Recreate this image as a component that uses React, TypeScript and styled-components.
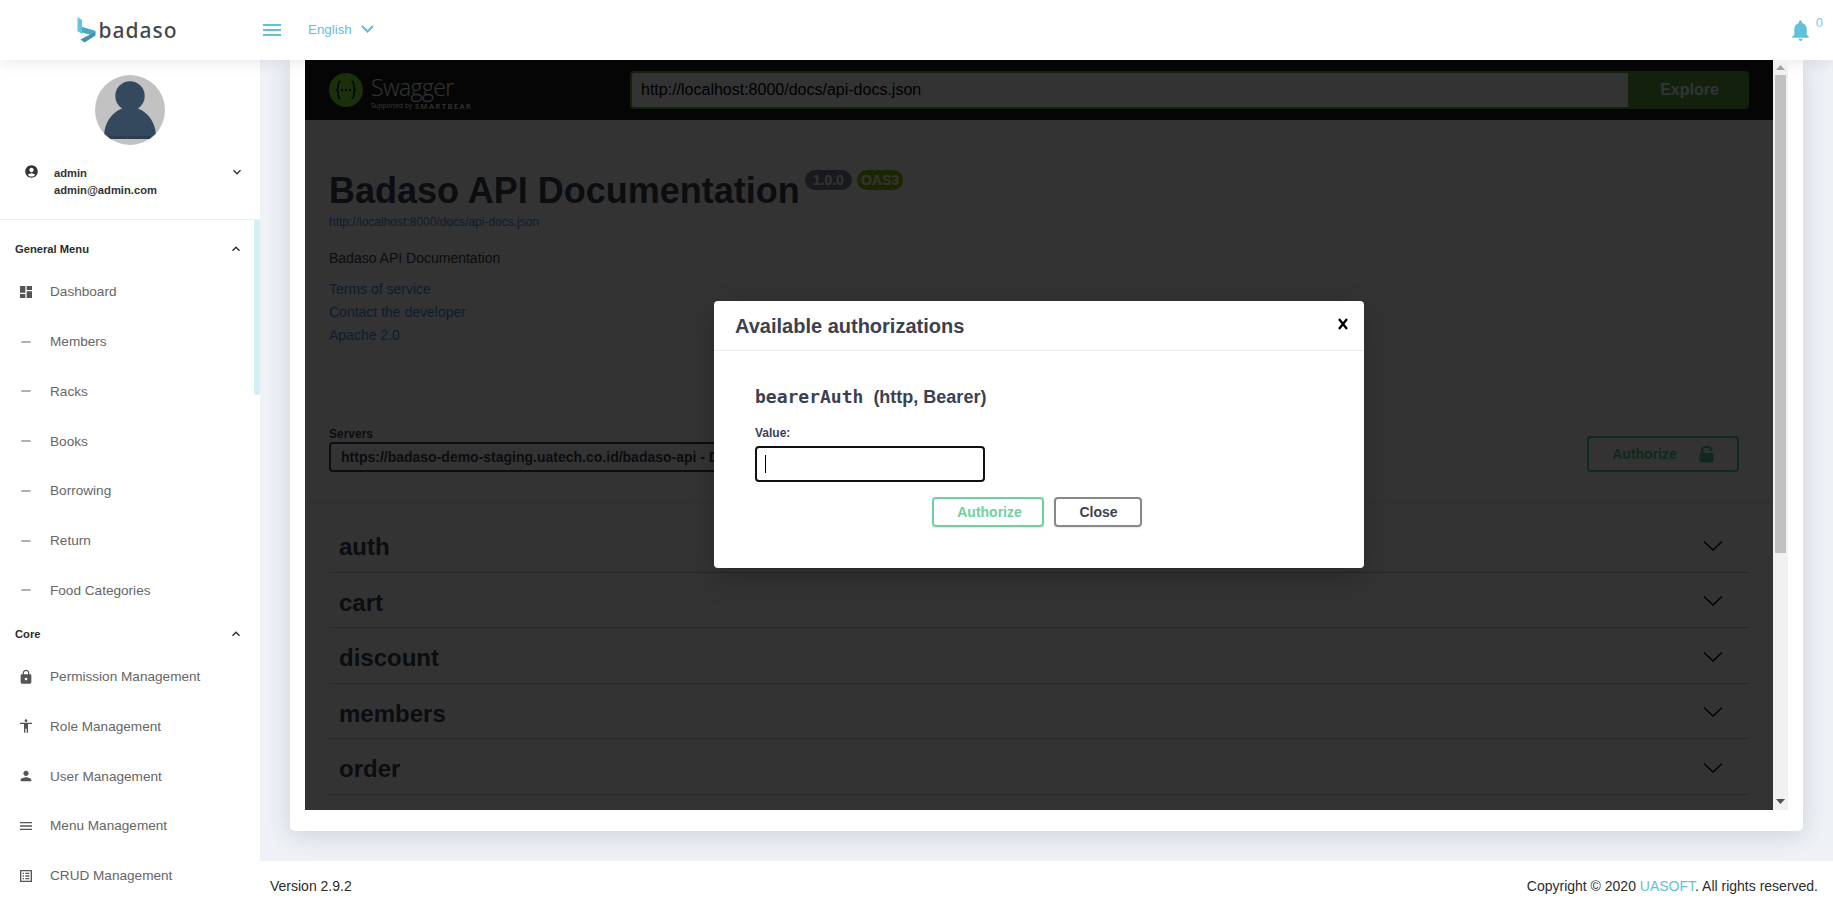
import React from "react";
import styled, { createGlobalStyle } from "styled-components";
import {
  MdDashboard, MdRemove, MdLock, MdAccessibility, MdPerson, MdMenu, MdListAlt,
  MdAccountCircle, MdExpandMore, MdExpandLess, MdNotifications,
} from "react-icons/md";

const Global = createGlobalStyle`
  html, body { margin: 0; padding: 0; height: 911px; overflow: hidden; }
  body { font-family: "Liberation Sans", Arial, sans-serif; background: #eef2f7; }
  * { box-sizing: border-box; }
`;

const Page = styled.div`
  width: 1833px; height: 911px; display: grid;
  grid-template-columns: 260px 1fr; grid-template-rows: 60px 1fr 50px;
  overflow: hidden;
`;
const TopBar = styled.header`
  grid-column: 1 / 3; background: #fff; display: flex; align-items: center;
  position: relative; z-index: 3; box-shadow: 0 2px 16px rgba(0,0,0,.09);
`;
const Brand = styled.div`
  width: 260px; display: flex; align-items: center; justify-content: center; gap: 2px;
  padding-right: 5px; flex: none;
`;
const BrandName = styled.span`
  font-family: "Noto Sans", sans-serif; font-size: 21px; font-weight: 500; color: #45474b; letter-spacing: 1px; line-height: 1; margin-top: 1px;
`;
const Burger = styled.svg`
  width: 18px; height: 14px; margin-left: 3px; color: #61c1da; flex: none;
`;
const Lang = styled.div`
  display: flex; align-items: center; gap: 9px; margin-left: 27px; margin-top: -2px;
  color: #61c1da; font-size: 13.33px;
`;
const Spacer = styled.div`flex: 1;`;
const BellWrap = styled.div`
  display: flex; align-items: flex-start; margin-right: 10px; color: #61c1da; gap: 3px; margin-top: 1px;
`;
const BellCount = styled.span`
  font-size: 13px; line-height: 13px; margin-top: -2px; color: #7fcde0;
`;
const Sidebar = styled.aside`
  grid-row: 2 / 4; background: #fff; position: relative; z-index: 2; overflow: hidden;
  display: flex; flex-direction: column;
`;
const Profile = styled.div`
  height: 160px; border-bottom: 1px solid #eceff1; flex: none;
  display: flex; flex-direction: column; align-items: center; padding-top: 15px;
`;
const UserRow = styled.div`
  width: 100%; display: flex; align-items: flex-start; padding: 19px 15px 0 24px; color: #333;
`;
const UserText = styled.div`
  flex: 1; margin-left: 15px; font-size: 11.2px; font-weight: 700; line-height: 17px; color: #333; margin-top: 1px;
`;
const Thumb = styled.div`
  position: absolute; right: 0; top: 160px; width: 6px; height: 175px; background: #d2f0f5; border-radius: 0 0 3px 3px;
`;
const Group = styled.div<{ $h: number; $pt?: number }>`
  height: ${p => p.$h}px; padding: ${p => p.$pt ?? 0}px 16px 0 15px; display: flex; align-items: center; justify-content: space-between;
  font-size: 11.2px; font-weight: 700; color: #2c2c2c; flex: none;
`;
const Item = styled.div<{ $dim?: boolean }>`
  height: 49.75px; display: flex; align-items: center; flex: none; padding-left: 18px; gap: 16px;
  font-size: 13.6px; color: #666;
  svg { flex: none; color: ${p => (p.$dim ? "#8a8a8a" : "#555")}; }
`;
const Main = styled.main`
  padding: 0 30px 30px 30px; min-height: 0; display: flex;
`;
const Card = styled.section`
  flex: 1; background: #fff; padding: 0 15px 21px; display: flex; border-radius: 0 0 5px 5px;
  box-shadow: 0 4px 25px rgba(34,41,47,.16);
`;
const Frame = styled.div`
  flex: 1; position: relative; overflow: hidden; background: #fff; display: flex;
`;
const Doc = styled.div`
  flex: 1; min-width: 0; display: flex; flex-direction: column; background: #fff; color: #3b4151;
`;
const SwTop = styled.div`
  height: 60px; background: #1b1b1b; display: flex; align-items: center; padding: 0 24px; flex: none;
`;
const SwLogo = styled.div`display: flex; align-items: center; width: 301px; flex: none; gap: 8px;`;
const SwName = styled.div`
  display: flex; flex-direction: column; color: #fff; width: 120px; margin-top: 4px; gap: 2px;
`;
const SwWord = styled.span`
  font-family: "Open Sans", sans-serif; font-weight: 300; font-size: 23px; letter-spacing: -.6px; line-height: 26px;
`;
const SwSub = styled.span`
  display: flex; align-items: center; gap: 3px; font-family: "Open Sans", sans-serif; font-size: 6.5px; line-height: 8px; white-space: nowrap;
`;
const SwBear = styled.span`font-size: 7.5px; letter-spacing: 1.5px; font-weight: 600;`;
const UrlForm = styled.div`
  flex: 1; height: 38px; display: flex; border: 2px solid #62a03f; border-radius: 4px; overflow: hidden;
`;
const UrlInput = styled.div`
  flex: 1; background: #fff; font-size: 16px; color: #000; padding-left: 9px; display: flex; align-items: center;
`;
const Explore = styled.div`
  width: 119px; background: #62a03f; color: #fff; font-size: 16px; font-weight: 700;
  display: flex; align-items: center; justify-content: center; padding-left: 4px;
`;
const Info = styled.div`padding: 50px 0 0 24px; height: 195px; flex: none;`;
const TitleRow = styled.div`display: flex; align-items: flex-start;`;
const Title = styled.h2`
  margin: 0; font-size: 36px; line-height: 41px; font-weight: 700; color: #3b4151;
`;
const Badge = styled.span<{ $c: string; $pad: number }>`
  height: 20px; border-radius: 10px; background: ${p => p.$c}; color: #fff; font-size: 14px; font-weight: 700;
  padding: 0 ${p => p.$pad}px; line-height: 20px; margin-left: 5px;
`;
const SmallLink = styled.div`font-size: 12px; color: #4990e2; line-height: 14px; margin-top: 4px;`;
const Desc = styled.div`font-size: 14px; color: #3b4151; line-height: 16px; margin-top: 21px;`;
const Link = styled.div`font-size: 14px; color: #4990e2; line-height: 16px; margin-top: 7px;`;
const Links = styled.div`margin-top: 15px; ${Link}:first-child { margin-top: 0; }`;
const Servers = styled.div`
  height: 188px; padding: 0 34px 30px 24px; display: flex; justify-content: space-between; align-items: flex-end;
  border-bottom: 1px solid #e4e4e4; flex: none;
`;
const ServerLabel = styled.div`font-size: 12px; font-weight: 700; color: #3b4151; line-height: 14px; margin-bottom: 1px;`;
const ServerBox = styled.div`
  width: fit-content; height: 30px; border: 2px solid #41444e; border-radius: 4px; font-size: 14px; font-weight: 700;
  color: #3b4151; display: flex; align-items: center; padding: 0 30px 0 10px; white-space: nowrap;
`;
const AuthBtn = styled.div`
  width: 152px; height: 36px; border: 2px solid #49cc90; border-radius: 4px; color: #49cc90; font-size: 14px; font-weight: 700;
  display: flex; align-items: center; justify-content: center; gap: 22px;
`;
const Tags = styled.div`padding: 14px 24px 0 24px; display: flex; flex-direction: column; flex: none;`;
const Tag = styled.div`
  height: 55.5px; display: flex; align-items: center; justify-content: space-between; border-bottom: 1px solid #c9cbce;
  padding: 6px 26px 0 10px; font-size: 24px; font-weight: 700; color: #3b4151;
`;
const Chev = styled.svg`width: 20px; height: 20px; color: #000; margin-top: -3px;`;
const ScrollBar = styled.div`
  position: relative; width: 15px; background: #f1f1f1; flex: none; z-index: 5;
  display: flex; flex-direction: column; align-items: center;
`;
const ScrollArrow = styled.svg`width: 9px; height: 5px; flex: none; margin: 5px 0 5px; color: #a3a3a3;`;
const ScrollDown = styled(ScrollArrow)`margin: auto 0 6px; color: #505050;`;
const ScrollThumb = styled.div`width: 11px; height: 478px; background: #c1c1c1; flex: none;`;
const DocWrap = styled.div`flex: 1; min-width: 0; position: relative; display: flex; overflow: hidden;`;
const Backdrop = styled.div`
  position: absolute; inset: 0; background: rgba(0,0,0,.8); z-index: 4;
`;
const Modal = styled.div`
  position: absolute; left: 409px; top: 241px; width: 650px; height: 267px; background: #fff; border-radius: 4px; z-index: 5;
  box-shadow: 0 10px 30px rgba(0,0,0,.2); color: #3b4151; display: flex; flex-direction: column;
`;
const ModalHead = styled.div`
  height: 50px; border-bottom: 1px solid #ebebeb; display: flex; align-items: center; justify-content: space-between;
  padding: 0 15px 0 21px; flex: none;
`;
const ModalTitle = styled.h4`margin: 0; font-size: 20px; font-weight: 700; color: #3b4151; line-height: 24px;`;
const CloseX = styled.svg`width: 12px; height: 12px; color: #000; margin-top: -3px;`;
const ModalBody = styled.div`padding: 37px 41px 0; display: flex; flex-direction: column; flex: 1;`;
const Scheme = styled.div`
  display: flex; align-items: baseline; gap: 10px; font-size: 18px; font-weight: 700; line-height: 18px;
`;
const Code = styled.code`font-family: "DejaVu Sans Mono", monospace; font-size: 18px; font-weight: 700;`;
const ValueLabel = styled.label`font-size: 12px; font-weight: 700; margin-top: 20px; line-height: 14px; display: block;`;
const FakeInput = styled.div`
  width: 230px; height: 36px; border: 2px solid #101010; border-radius: 4px; margin-top: 6px; padding: 7px 0 0 8px; flex: none;
`;
const Caret = styled.div`width: 1px; height: 18px; background: #000;`;
const ModalBtns = styled.div`display: flex; justify-content: center; gap: 10px; margin-top: 15px; padding-right: 5px;`;
const ModalBtn = styled.div<{ $green?: boolean }>`
  height: 30px; width: ${p => (p.$green ? 112 : 88)}px; border-radius: 4px; border: 2px solid ${p => (p.$green ? "#6fd09f" : "#888")};
  color: ${p => (p.$green ? "#6fd09f" : "#3b4151")}; font-size: 14px; font-weight: 700;
  display: flex; align-items: center; justify-content: center; padding-left: ${p => (p.$green ? 4 : 2)}px;
  box-shadow: 0 1px 2px rgba(0,0,0,.1);
`;
const Footer = styled.footer`
  background: #fff; display: flex; align-items: center; justify-content: space-between; padding: 0 15px 0 10px;
  font-size: 14px; color: #2c2c2c; position: relative; z-index: 1;
`;
const Accent = styled.span`color: #61c1da;`;

const general = ["Members", "Racks", "Books", "Borrowing", "Return", "Food Categories"];
const core: [string, React.ComponentType<{ size: number }>][] = [
  ["Permission Management", MdLock],
  ["Role Management", MdAccessibility],
  ["User Management", MdPerson],
  ["Menu Management", MdMenu],
  ["CRUD Management", MdListAlt],
];

const Logo = () => (
  <svg width="19" height="26" viewBox="0 0 19 26">
    <path d="M0.5 0 L5 3 V10 L18.5 14 L13 17.5 L5 15.5 V17 L0.5 14 Z" fill="#5fc5e3" />
    <path d="M5 10 L18.5 14 L13 17.5 L5 15.5 Z" fill="#4aa7c5" />
    <path d="M3.5 22.5 L13 17.5 L18.5 14 L18.5 18.5 L7.5 25.5 Z" fill="#3f93ab" />
  </svg>
);

const Avatar = () => (
  <svg width="70" height="70" viewBox="0 0 70 70">
    <clipPath id="av"><circle cx="35" cy="35" r="35" /></clipPath>
    <g clipPath="url(#av)">
      <rect width="70" height="70" fill="#c2c2c2" />
      <circle cx="35" cy="21" r="14.7" fill="#34495e" />
      <path d="M9 62 C9 44 22 32 35 32 C48 32 61 44 61 62 Z" fill="#34495e" />
      <rect x="13" y="61" width="44" height="3" fill="#2c3e50" />
    </g>
  </svg>
);

const SwaggerMark = () => (
  <svg width="34" height="34" viewBox="0 0 34 34">
    <circle cx="17" cy="17" r="17" fill="#85ea2d" />
    <g fill="none" stroke="#173647" strokeWidth="1.8">
      <path d="M11.5 8.5 C8.5 8.5 9.5 12 9 15 C8.8 16.3 7.8 17 7 17 C7.8 17 8.8 17.7 9 19 C9.5 22 8.5 25.5 11.5 25.5" />
      <path d="M22.5 8.5 C25.5 8.5 24.5 12 25 15 C25.2 16.3 26.2 17 27 17 C26.2 17 25.2 17.7 25 19 C24.5 22 25.5 25.5 22.5 25.5" />
    </g>
    <g fill="#173647"><circle cx="13" cy="17" r="1.2" /><circle cx="17" cy="17" r="1.2" /><circle cx="21" cy="17" r="1.2" /></g>
  </svg>
);

export default function App() {
  return (
    <Page>
      <Global />
      <TopBar>
        <Brand>
          <Logo />
          <BrandName>badaso</BrandName>
        </Brand>
        <Burger viewBox="0 0 18 14"><g fill="currentColor"><rect y="1" width="18" height="2" /><rect y="6" width="18" height="2" /><rect y="11" width="18" height="2" /></g></Burger>
        <Lang>
          English
          <svg width="13" height="8" viewBox="0 0 13 8"><path d="M1 1 L6.5 6.5 L12 1" fill="none" stroke="currentColor" strokeWidth="2.2" /></svg>
        </Lang>
        <Spacer />
        <BellWrap>
          <MdNotifications size={25} />
          <BellCount>0</BellCount>
        </BellWrap>
      </TopBar>
      <Sidebar>
        <Thumb />
        <Profile>
          <Avatar />
          <UserRow>
            <MdAccountCircle size={15} />
            <UserText>admin<br />admin@admin.com</UserText>
            <MdExpandMore size={16} />
          </UserRow>
        </Profile>
        <Group $h={47} $pt={10}>General Menu <MdExpandLess size={16} /></Group>
        <Item><MdDashboard size={16} />Dashboard</Item>
        {general.map(g => <Item $dim key={g}><MdRemove size={16} />{g}</Item>)}
        <Group $h={36.6}>Core <MdExpandLess size={16} /></Group>
        {core.map(([t, I]) => <Item key={t}><I size={16} />{t}</Item>)}
      </Sidebar>
      <Main>
        <Card>
          <Frame>
            <DocWrap>
              <Doc>
                <SwTop>
                  <SwLogo>
                    <SwaggerMark />
                    <SwName>
                      <SwWord>Swagger</SwWord>
                      <SwSub>Supported by <SwBear>SMARTBEAR</SwBear></SwSub>
                    </SwName>
                  </SwLogo>
                  <UrlForm>
                    <UrlInput>http://localhost:8000/docs/api-docs.json</UrlInput>
                    <Explore>Explore</Explore>
                  </UrlForm>
                </SwTop>
                <Info>
                  <TitleRow>
                    <Title>Badaso API Documentation</Title>
                    <Badge $c="#7d8492" $pad={8}>1.0.0</Badge>
                    <Badge $c="#89bf04" $pad={4}>OAS3</Badge>
                  </TitleRow>
                  <SmallLink>http://localhost:8000/docs/api-docs.json</SmallLink>
                  <Desc>Badaso API Documentation</Desc>
                  <Links>
                    <Link>Terms of service</Link>
                    <Link>Contact the developer</Link>
                    <Link>Apache 2.0</Link>
                  </Links>
                </Info>
                <Servers>
                  <div>
                    <ServerLabel>Servers</ServerLabel>
                    <ServerBox>https://badaso-demo-staging.uatech.co.id/badaso-api - Demo server</ServerBox>
                  </div>
                  <AuthBtn>
                    Authorize
                    <svg width="15" height="18" viewBox="0 0 15 18"><path d="M2 8 V5 C2 2 4.5 0.8 7.5 0.8 C10.5 0.8 13 2 13 5 V6 H10.6 V5 C10.6 3.6 9.3 3 7.5 3 C5.7 3 4.4 3.6 4.4 5 V8 H12.5 C13.8 8 14.5 8.7 14.5 10 V15.5 C14.5 16.8 13.8 17.5 12.5 17.5 H2.5 C1.2 17.5 .5 16.8 .5 15.5 V10 C.5 8.7 1.2 8 2 8 Z" fill="currentColor" /></svg>
                  </AuthBtn>
                </Servers>
                <Tags>
                  {["auth", "cart", "discount", "members", "order"].map(t => (
                    <Tag key={t}>
                      {t}
                      <Chev viewBox="0 0 20 20"><path d="M1 5.5 L10 14 L19 5.5" fill="none" stroke="currentColor" strokeWidth="1.4" /></Chev>
                    </Tag>
                  ))}
                </Tags>
              </Doc>
              <Backdrop />
              <Modal>
                <ModalHead>
                  <ModalTitle>Available authorizations</ModalTitle>
                  <CloseX viewBox="0 0 12 12"><path d="M2 1 L10 11 M10 1 L2 11" stroke="currentColor" strokeWidth="2.4" fill="none" /></CloseX>
                </ModalHead>
                <ModalBody>
                  <Scheme><Code>bearerAuth</Code>(http, Bearer)</Scheme>
                  <ValueLabel>Value:</ValueLabel>
                  <FakeInput><Caret /></FakeInput>
                  <ModalBtns>
                    <ModalBtn $green>Authorize</ModalBtn>
                    <ModalBtn>Close</ModalBtn>
                  </ModalBtns>
                </ModalBody>
              </Modal>
            </DocWrap>
            <ScrollBar>
              <ScrollArrow viewBox="0 0 9 5"><path d="M0 5 L4.5 0 L9 5 Z" fill="currentColor" /></ScrollArrow>
              <ScrollThumb />
              <ScrollDown viewBox="0 0 9 5"><path d="M0 0 L4.5 5 L9 0 Z" fill="currentColor" /></ScrollDown>
            </ScrollBar>
          </Frame>
        </Card>
      </Main>
      <Footer>
        <span>Version 2.9.2</span>
        <span>Copyright © 2020 <Accent>UASOFT</Accent>. All rights reserved.</span>
      </Footer>
    </Page>
  );
}
